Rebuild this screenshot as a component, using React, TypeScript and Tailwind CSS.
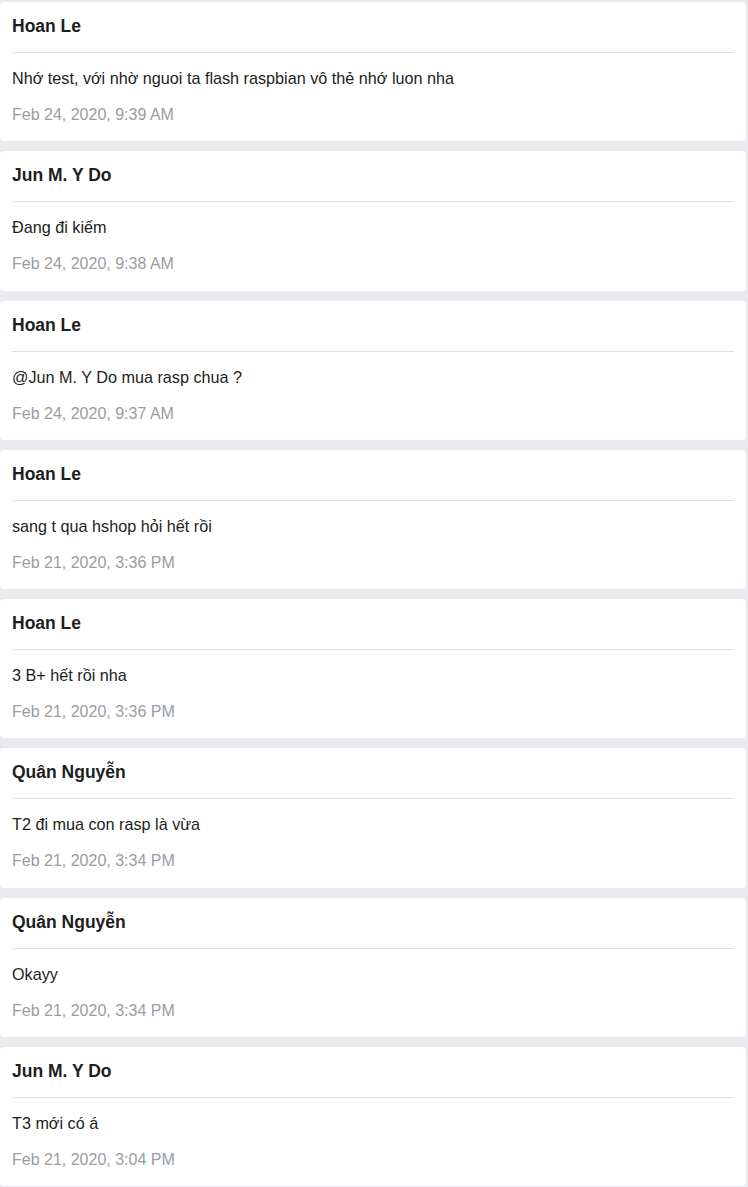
import React from "react";

interface Message {
  author: string;
  text: string;
  time: string;
}

const messages: Message[] = [
  { author: "Hoan Le", text: "Nhớ test, với nhờ nguoi ta flash raspbian vô thẻ nhớ luon nha", time: "Feb 24, 2020, 9:39 AM" },
  { author: "Jun M. Y Do", text: "Đang đi kiếm", time: "Feb 24, 2020, 9:38 AM" },
  { author: "Hoan Le", text: "@Jun M. Y Do mua rasp chua ?", time: "Feb 24, 2020, 9:37 AM" },
  { author: "Hoan Le", text: "sang t qua hshop hỏi hết rồi", time: "Feb 21, 2020, 3:36 PM" },
  { author: "Hoan Le", text: "3 B+ hết rồi nha", time: "Feb 21, 2020, 3:36 PM" },
  { author: "Quân Nguyễn", text: "T2 đi mua con rasp là vừa", time: "Feb 21, 2020, 3:34 PM" },
  { author: "Quân Nguyễn", text: "Okayy", time: "Feb 21, 2020, 3:34 PM" },
  { author: "Jun M. Y Do", text: "T3 mới có á", time: "Feb 21, 2020, 3:04 PM" },
];

const MessageCard = ({ message }: { message: Message }) => (
  <div className=" bg-white rounded px-3 pt-[13px] pb-[15.3px]">
    <h3 className=" text-[17.5px] leading-[22px] font-bold text-[#1c1e21] pb-[15px] border-b border-[#dddfe2]">
      {message.author}
    </h3>
    <p className=" mt-3.5 text-[16.2px] leading-[22px] text-[#1c1e21]">{message.text}</p>
    <p className=" mt-[15px] text-base leading-[22px] text-[#9a9ca3]">{message.time}</p>
  </div>
);

const App = () => {
  return (
    <div
      className=" min-h-[1187px] bg-[#e9eaee] pt-0.5 pr-0.5 flex flex-col gap-2.5"
      style={{ fontFamily: '"Liberation Sans", Arial, sans-serif' }}
    >
      {messages.map((m, i) => (
        <MessageCard key={i} message={m} />
      ))}
    </div>
  );
};

export default App;
